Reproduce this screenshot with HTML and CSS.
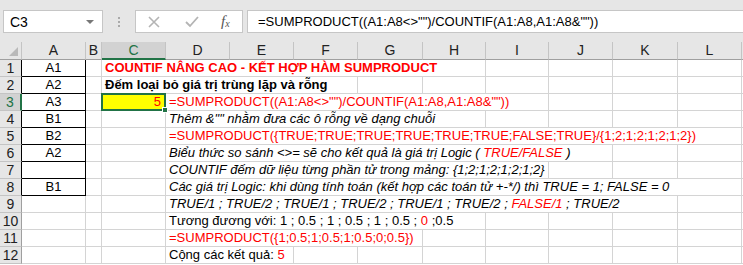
FILE: index.html
```html
<!DOCTYPE html>
<html lang="vi">
<head>
  <meta charset="UTF-8" />
  <title>COUNTIF nâng cao</title>
  <link rel="stylesheet" href="styles.css">
</head>
<body>

  <div class="toolbar">
    <div class="namebox">
      <span>C3</span>
      <span class="caret"></span>
    </div>
    <div class="grip"><i></i><i></i><i></i></div>
    <div class="fbtns">
      <svg width="14" height="14" viewBox="0 0 14 14"><path d="M2 2 L12 12 M12 2 L2 12" stroke="#b4b4b4" stroke-width="1.6" fill="none"/></svg>
      <svg width="16" height="14" viewBox="0 0 16 14"><path d="M2 7 L6 11 L14 2" stroke="#b4b4b4" stroke-width="1.8" fill="none"/></svg>
      <span class="fx">f<sub>x</sub></span>
    </div>
    <div class="finput">=SUMPRODUCT((A1:A8&lt;&gt;"")/COUNTIF(A1:A8,A1:A8&amp;""))</div>
  </div>

  <div class="sheet">
    <!-- column headers -->
    <div class="corner"><span class="tri"></span></div>
    <div class="ch">A</div><div class="ch">B</div><div class="ch sel">C</div><div class="ch">D</div>
    <div class="ch">E</div><div class="ch">F</div><div class="ch">G</div><div class="ch">H</div>
    <div class="ch">I</div><div class="ch">J</div><div class="ch">K</div><div class="ch">L</div><div class="ch end"></div>

    <!-- 1 -->
    <div class="rh bk">1</div><div class="c bx">A1</div><div class="c"></div>
    <div class="c txt span6 title">COUNTIF NÂNG CAO - KẾT HỢP HÀM SUMPRODUCT</div>
    <div class="c"></div><div class="c"></div><div class="c"></div><div class="c"></div><div class="c end"></div>

    <!-- 2 -->
    <div class="rh bk">2</div><div class="c bx">A2</div><div class="c"></div>
    <div class="c txt span4 bold">Đếm loại bỏ giá trị trùng lặp và rỗng</div>
    <div class="c"></div><div class="c"></div><div class="c"></div><div class="c"></div><div class="c"></div><div class="c"></div><div class="c end"></div>

    <!-- 3 -->
    <div class="rh bk sel">3</div><div class="c bx">A3</div><div class="c"></div>
    <div class="c active"><span>5</span><i class="handle"></i></div>
    <div class="c txt span6 red">=SUMPRODUCT((A1:A8&lt;&gt;"")/COUNTIF(A1:A8,A1:A8&amp;""))</div>
    <div class="c"></div><div class="c"></div><div class="c"></div><div class="c end"></div>

    <!-- 4 -->
    <div class="rh bk">4</div><div class="c bx">B1</div><div class="c"></div><div class="c"></div>
    <div class="c txt span5 it">Thêm &amp;"" nhằm đưa các ô rỗng về dạng chuỗi</div>
    <div class="c"></div><div class="c"></div><div class="c"></div><div class="c"></div><div class="c end"></div>

    <!-- 5 -->
    <div class="rh bk">5</div><div class="c bx">B2</div><div class="c"></div><div class="c"></div>
    <div class="c txt span9 red">=SUMPRODUCT({TRUE;TRUE;TRUE;TRUE;TRUE;TRUE;FALSE;TRUE}/{1;2;1;2;1;2;1;2})</div>
    <div class="c end"></div>

    <!-- 6 -->
    <div class="rh bk">6</div><div class="c bx">A2</div><div class="c"></div><div class="c"></div>
    <div class="c txt span7 it">Biểu thức so sánh &lt;&gt;= sẽ cho kết quả là giá trị Logic ( <span class="red">TRUE/FALSE</span> )</div>
    <div class="c"></div><div class="c"></div><div class="c end"></div>

    <!-- 7 -->
    <div class="rh bk">7</div><div class="c bx"></div><div class="c"></div><div class="c"></div>
    <div class="c txt span6 it">COUNTIF đếm dữ liệu từng phần tử trong mảng: {1;2;1;2;1;2;1;2}</div>
    <div class="c"></div><div class="c"></div><div class="c"></div><div class="c end"></div>

    <!-- 8 -->
    <div class="rh bk">8</div><div class="c bx">B1</div><div class="c"></div><div class="c"></div>
    <div class="c txt span9 it">Các giá trị Logic: khi dùng tính toán (kết hợp các toán tử +-*/) thì TRUE = 1; FALSE = 0</div>
    <div class="c end"></div>

    <!-- 9 -->
    <div class="rh">9</div><div class="c"></div><div class="c"></div><div class="c"></div>
    <div class="c txt span8 it">TRUE/1 ; TRUE/2 ; TRUE/1 ; TRUE/2 ; TRUE/1 ; TRUE/2 ; <span class="red">FALSE/1</span> ; TRUE/2</div>
    <div class="c"></div><div class="c end"></div>

    <!-- 10 -->
    <div class="rh">10</div><div class="c"></div><div class="c"></div><div class="c"></div>
    <div class="c txt span5">Tương đương với: 1 ; 0.5 ; 1 ; 0.5 ; 1 ; 0.5 ; <span class="red">0</span> ;0.5</div>
    <div class="c"></div><div class="c"></div><div class="c"></div><div class="c"></div><div class="c end"></div>

    <!-- 11 -->
    <div class="rh">11</div><div class="c"></div><div class="c"></div><div class="c"></div>
    <div class="c txt span4 red">=SUMPRODUCT({1;0.5;1;0.5;1;0.5;0;0.5})</div>
    <div class="c"></div><div class="c"></div><div class="c"></div><div class="c"></div><div class="c"></div><div class="c end"></div>

    <!-- 12 -->
    <div class="rh">12</div><div class="c"></div><div class="c"></div><div class="c"></div>
    <div class="c txt span2">Cộng các kết quả: <span class="red">5</span></div>
    <div class="c"></div><div class="c"></div><div class="c"></div><div class="c"></div><div class="c"></div><div class="c"></div><div class="c"></div><div class="c end"></div>
  </div>

</body>
</html>
```

FILE: styles.css
```css
* { margin: 0; padding: 0; box-sizing: border-box; }

body {
  font-family: 'Liberation Sans', Arial, sans-serif;
  font-size: 13px;
  color: #000;
  background: #fff;
  overflow: hidden;
}

/* formula bar */
.toolbar {
  height: 42px;
  background: #e6e6e6;
  display: flex;
  align-items: flex-start;
  padding-top: 10px;
  padding-left: 3px;
}

.namebox {
  width: 100px;
  height: 23px;
  background: #fff;
  border: 1px solid #c6c6c6;
  display: flex;
  align-items: center;
  justify-content: space-between;
  padding: 0 8px 0 6px;
  font-size: 14px;
}

.caret {
  width: 0;
  height: 0;
  border-left: 4px solid transparent;
  border-right: 4px solid transparent;
  border-top: 4px solid #777;
}

.grip {
  width: 32px;
  height: 23px;
  display: flex;
  flex-direction: column;
  align-items: center;
  justify-content: center;
  gap: 2px;
}

.grip i {
  width: 2px;
  height: 2px;
  background: #aaa;
}

.fbtns {
  width: 108px;
  height: 23px;
  background: #fff;
  border: 1px solid #c6c6c6;
  display: flex;
  align-items: center;
  padding-left: 11px;
  gap: 23px;
}

.fx {
  font-family: 'Liberation Serif', serif;
  font-style: italic;
  font-size: 15px;
  color: #555;
  margin-left: -2px;
}

.fx sub {
  font-size: 10px;
  vertical-align: -1px;
}

.finput {
  flex: 1;
  margin-left: 4px;
  height: 23px;
  background: #fff;
  border: 1px solid #c6c6c6;
  border-right: none;
  padding-left: 10px;
  line-height: 21px;
  font-size: 13px;
}

/* sheet grid */
.sheet {
  display: grid;
  grid-template-columns: 22px 64px 16px 64px 64px 64px 64px 65px 63px 63px 64px 65px 64px 1fr;
  grid-template-rows: 18px repeat(12, 17px);
}

.corner {
  background: #e6e6e6;
  border-right: 1px solid #c4c4c4;
  border-bottom: 1px solid #9f9f9f;
  position: relative;
}

.corner .tri {
  position: absolute;
  right: 3px;
  bottom: 3px;
  width: 0;
  height: 0;
  border-left: 9px solid transparent;
  border-bottom: 9px solid #b9b9b9;
}

.ch {
  background: #e6e6e6;
  border-right: 1px solid #c4c4c4;
  border-bottom: 1px solid #9f9f9f;
  text-align: center;
  line-height: 17px;
  font-size: 14px;
  color: #222;
}

.ch.sel {
  background: #d2d2d2;
  border-bottom: 2px solid #217346;
  color: #217346;
}

.rh {
  background: #e6e6e6;
  border-right: 1px solid #9f9f9f;
  border-bottom: 1px solid #c4c4c4;
  text-align: center;
  line-height: 16px;
  font-size: 14px;
  color: #222;
}

.rh.bk { border-right-color: #000; }

.rh.sel {
  background: #d2d2d2;
  border-right: 2px solid #217346;
  color: #217346;
}

.c {
  border-right: 1px solid #d4d4d4;
  border-bottom: 1px solid #d4d4d4;
  line-height: 16px;
  white-space: nowrap;
}

.c.end, .ch.end { border-right: none; }

.c.bx {
  border-right: 1px solid #000;
  border-bottom: 1px solid #000;
  text-align: center;
}

.txt { padding-left: 3px; }

.span2 { grid-column: span 2; }
.span4 { grid-column: span 4; }
.span5 { grid-column: span 5; }
.span6 { grid-column: span 6; }
.span7 { grid-column: span 7; }
.span8 { grid-column: span 8; }
.span9 { grid-column: span 9; }

.title { color: #ff0000; font-weight: bold; }
.bold { font-weight: bold; }
.red { color: #ff0000; }
.it { font-style: italic; }

.active {
  position: relative;
  background: #ffff00;
  color: #ff0000;
  text-align: right;
  padding-right: 3px;
  border: 2px solid #217346;
  margin: -1px 0 0 -1px;
  line-height: 14px;
}

.handle {
  position: absolute;
  right: -4px;
  bottom: -4px;
  width: 6px;
  height: 6px;
  background: #217346;
  border: 1px solid #fff;
}
```
